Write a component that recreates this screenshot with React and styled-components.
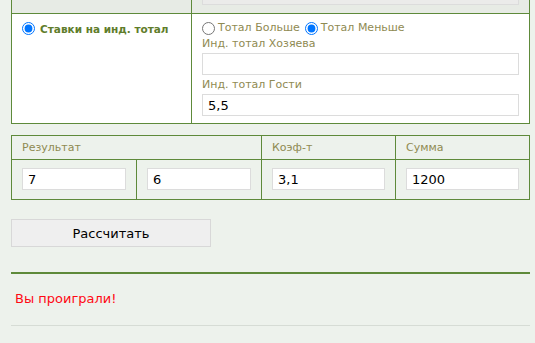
import styled, { createGlobalStyle } from "styled-components";

const GlobalStyle = createGlobalStyle`
  html, body {
    margin: 0;
    padding: 0;
    background: #edf2ec;
    font-family: "DejaVu Sans", Verdana, sans-serif;
    overflow: hidden;
  }
`;

const Page = styled.div`
  padding: 0 5px 0 11px;
`;

const Table = styled.table`
  width: 100%;
  border-collapse: collapse;
  margin-top: ${(p) => p.$top || 0}px;
  td {
    border: 1px solid #5e8a3a;
    vertical-align: top;
  }
`;

const GreyCell = styled.td`
  background: #e7ebe5;
  padding: 8px 10px;
  height: 22px;
`;

const WhiteCell = styled.td`
  background: #fff;
  padding: 6px 10px 7px 10px;
  width: ${(p) => p.$w || "auto"};
`;

const HeadCell = styled.td`
  padding: 5px 10px 4px 10px;
  height: 14px;
  font-size: 11px;
  color: #8f8a52;
  line-height: 14px;
`;

const InputCell = styled.td`
  padding: 8px 10px 9px 10px;
  height: 22px;
  width: ${(p) => p.$w || "auto"};
`;

const Field = styled.input`
  display: block;
  box-sizing: border-box;
  width: 100%;
  height: 22px;
  margin: 0;
  padding: 1px 5px 0;
  border: 1px solid #dcdcdc;
  background: ${(p) => (p.$grey ? "#ebebea" : "#fff")};
  font-family: "DejaVu Sans", Verdana, sans-serif;
  font-size: 13px;
  color: #000;
  outline: none;
`;

const Choice = styled.label`
  display: inline-flex;
  align-items: center;
  gap: ${(p) => (p.$bold ? "5px" : "3px")};
  font-size: ${(p) => (p.$bold ? "10.5px" : "11px")};
  line-height: 16px;
  color: ${(p) => (p.$bold ? "#5f7d2b" : "#8f8a52")};
  font-weight: ${(p) => (p.$bold ? "bold" : "normal")};
  margin-right: 5px;
  input {
    margin: 0;
    width: 13px;
    height: 13px;
  }
`;

const ChoiceRow = styled.div`
  display: flex;
`;

const Caption = styled.div`
  font-size: 11px;
  line-height: 16px;
  color: #8f8a52;
  margin: ${(p) => p.$m || "0 0 1px"};
`;

const CalcButton = styled.button`
  display: block;
  width: 200px;
  height: 28px;
  margin-top: 19px;
  border: 1px solid #d8d8d8;
  background: #efefef;
  font-family: "DejaVu Sans", Verdana, sans-serif;
  font-size: 13px;
  color: #000;
  padding: 0;
`;

const Divider = styled.div`
  height: ${(p) => p.$h}px;
  background: ${(p) => p.$c};
  margin-top: ${(p) => p.$top}px;
`;

const Result = styled.div`
  color: #ff0a14;
  font-size: 13px;
  line-height: 16px;
  padding: 17px 0 0 4px;
  height: 34px;
`;

export default function App() {
  return (
    <Page>
      <GlobalStyle />
      <Table $top={-26}>
        <tbody>
          <tr>
            <GreyCell></GreyCell>
            <GreyCell>
              <Field $grey readOnly />
            </GreyCell>
          </tr>
          <tr>
            <WhiteCell $w="159px">
              <Choice $bold>
                <input type="radio" defaultChecked />
                Ставки на инд. тотал
              </Choice>
            </WhiteCell>
            <WhiteCell>
              <ChoiceRow>
                <Choice>
                  <input type="radio" name="t" />
                  Тотал Больше
                </Choice>
                <Choice>
                  <input type="radio" name="t" defaultChecked />
                  Тотал Меньше
                </Choice>
              </ChoiceRow>
              <Caption>Инд. тотал Хозяева</Caption>
              <Field />
              <Caption $m="2px 0 1px">Инд. тотал Гости</Caption>
              <Field defaultValue="5,5" />
            </WhiteCell>
          </tr>
        </tbody>
      </Table>

      <Table $top={11}>
        <tbody>
          <tr>
            <HeadCell colSpan={2}>Результат</HeadCell>
            <HeadCell>Коэф-т</HeadCell>
            <HeadCell>Сумма</HeadCell>
          </tr>
          <tr>
            <InputCell $w="104px">
              <Field defaultValue="7" />
            </InputCell>
            <InputCell $w="104px">
              <Field defaultValue="6" />
            </InputCell>
            <InputCell $w="113px">
              <Field defaultValue="3,1" />
            </InputCell>
            <InputCell>
              <Field defaultValue="1200" />
            </InputCell>
          </tr>
        </tbody>
      </Table>

      <CalcButton>Рассчитать</CalcButton>
      <Divider $h={2} $c="#5e8a3a" $top={25} />
      <Result>Вы проиграли!</Result>
      <Divider $h={1} $c="#d6dcd5" $top={0} />
    </Page>
  );
}
